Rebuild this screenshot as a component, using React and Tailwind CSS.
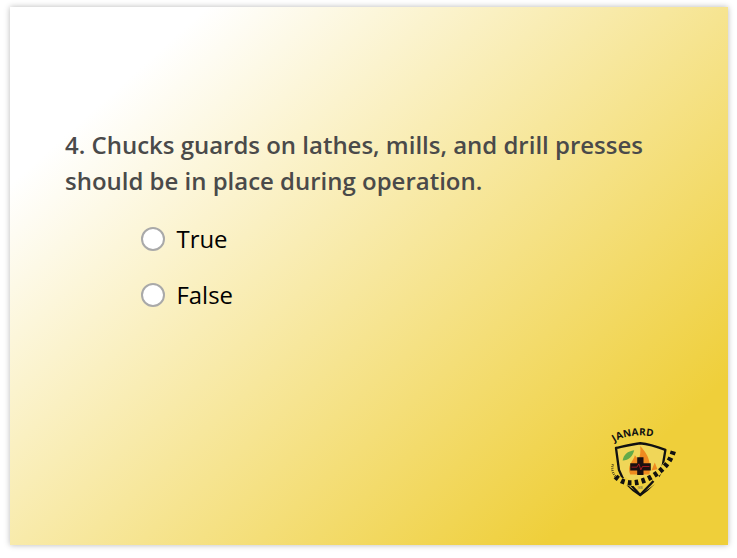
const options = ['True', 'False']

// drawn in the coordinates of a 3x crop of the badge
const Logo = () => (
  <svg width="67" height="68" viewBox="60 30 200 205" className="block overflow-visible">
    <defs>
      <path id="badge-arc" d="M72 66 C110 40 190 38 244 72" />
    </defs>
    <text fontFamily="'Open Sans', sans-serif" fontWeight="700" fontSize="30" letterSpacing="0.5" fill="#111">
      <textPath href="#badge-arc" startOffset="0">JANARD</textPath>
    </text>
    <path d="M77 84 C105 78 130 72 150 70 C172 72 200 80 226 90 L216 150 C200 185 176 210 150 226 C124 210 98 185 86 150 Z" fill="#f0d658" stroke="#111" strokeWidth="7" strokeLinejoin="round" />
    <path d="M97 122 C100 104 112 94 132 91 C128 108 116 122 97 122 Z" fill="#63aa4a" />
    <path d="M120 164 C108 136 130 124 134 106 C140 112 142 116 144 122 C150 110 152 94 150 78 C164 94 186 116 178 164 Z" fill="#ef8a1f" />
    <path d="M184 152 L194 128 L202 148 Z" fill="#ef8a1f" />
    <path d="M141 112 H160 V130 H182 V152 H160 V166 H141 V152 H120 V130 H141 Z" fill="#1a0f10" />
    <path d="M124 142 H140 L146 132 L152 150 L157 140 H178" fill="none" stroke="#e0222b" strokeWidth="2" />
    <path d="M104 172 C130 192 170 190 196 158 L212 176 C192 198 170 212 150 222 C130 212 112 196 96 180 Z" fill="#eed03f" />
    <path d="M112 184 C124 198 134 208 150 226 C166 208 178 198 190 184" fill="none" stroke="#111" strokeWidth="7" strokeLinejoin="round" />
    <text x="150" y="208" textAnchor="middle" fontFamily="'Open Sans', sans-serif" fontSize="8" fill="#555">JNW</text>
    <path d="M68 134 C64 148 66 160 76 170" fill="none" stroke="#111" strokeWidth="7" strokeDasharray="2 4" />
    <path d="M76 170 C90 186 112 191 132 189 C178 184 236 146 250 94" fill="none" stroke="#efd13c" strokeWidth="18" />
    <path d="M76 170 C90 186 112 191 132 189 C178 184 236 146 250 94" fill="none" stroke="#111" strokeWidth="16" strokeDasharray="11 10" />
  </svg>
)

export default function App() {
  return (
    <div className="h-[558px] w-[737px] overflow-hidden bg-white pl-[10px] pt-[7px] font-['Open_Sans',sans-serif]">
      <div className="relative h-[538px] w-[718px] bg-[linear-gradient(138deg,#ffffff_15%,#efcf3a_86%)] px-[55px] pt-[120px] shadow-[0_0_6px_rgba(0,0,0,0.28)]">
        <h1 className="text-[23.98px] leading-9 font-semibold text-[#4a4a4a]">
          4. Chucks guards on lathes, mills, and drill presses
          <br />
          should be in place during operation.
        </h1>
        <ul className="mt-[12px] flex flex-col pl-[76px]">
          {options.map((option) => (
            <li key={option} className="flex h-14 items-center gap-[11.5px]">
              <span className="h-6 w-6 rounded-full border-2 border-[#a9a9a9] bg-white" />
              <span className="text-[23.9px] leading-9 text-black">{option}</span>
            </li>
          ))}
        </ul>
        <div className="absolute right-[51px] bottom-[47px]">
          <Logo />
        </div>
      </div>
    </div>
  )
}
